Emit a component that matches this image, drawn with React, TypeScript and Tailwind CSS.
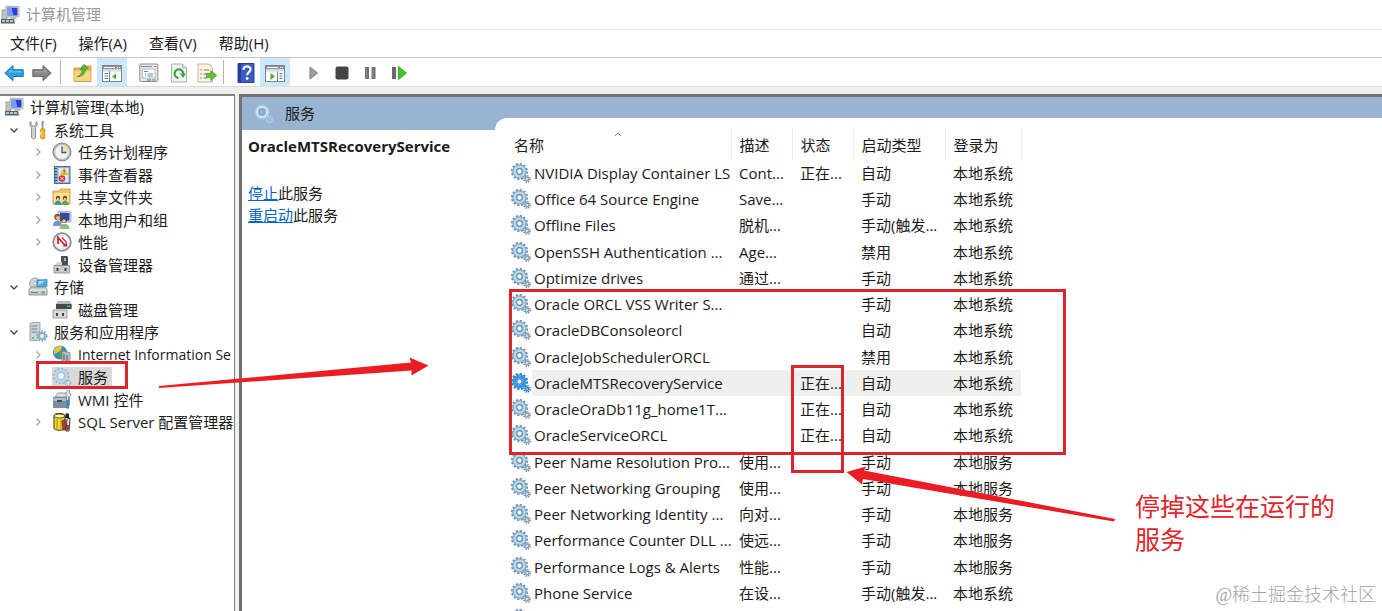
import type { ReactNode } from 'react'

type IconProps = { className?: string }

const Svg = ({ children, className = 'w-5 h-5' }: { children: ReactNode; className?: string }) => (
  <svg viewBox="0 0 20 20" className={`${className} shrink-0`} fill="none" aria-hidden="true">
    {children}
  </svg>
)

/* ---------- gears ---------- */

const GearIcon = () => (
  <Svg>
    <circle cx="8.500" cy="8.500" r="7.400" stroke="#7394ae" strokeWidth="2.400" strokeDasharray="2.200 1.670" />
    <circle cx="8.500" cy="8.500" r="5" stroke="#a3c8e2" strokeWidth="4" />
    <circle cx="8.500" cy="8.500" r="6.600" stroke="#7596b0" strokeWidth="0.700" />
    <circle cx="8.500" cy="8.500" r="4.900" stroke="#bbdcf1" strokeWidth="1.500" />
    <circle cx="8.500" cy="8.500" r="2.800" fill="#fff" stroke="#5f88a9" strokeWidth="1.200" />
    <circle cx="16" cy="16" r="3" stroke="#738fa6" strokeWidth="1.800" strokeDasharray="1.300 1.050" />
    <circle cx="16" cy="16" r="1.700" fill="#e4eff7" stroke="#85a8c3" strokeWidth="1.400" />
  </Svg>
)

const GearActiveIcon = () => (
  <Svg>
    <circle cx="8.500" cy="8.500" r="7.400" stroke="#2b7fc4" strokeWidth="2.400" strokeDasharray="2.200 1.670" />
    <circle cx="8.500" cy="8.500" r="5" stroke="#3b97df" strokeWidth="4" />
    <circle cx="8.500" cy="8.500" r="2.600" fill="#e8f5ff" stroke="#2474b8" strokeWidth="1" />
    <circle cx="16" cy="16" r="3" stroke="#2b7fc4" strokeWidth="1.800" strokeDasharray="1.300 1.050" />
    <circle cx="16" cy="16" r="1.700" fill="#8cc5ef" stroke="#3b8fd2" strokeWidth="1.400" />
  </Svg>
)

const GearLightIcon = () => (
  <Svg>
    <circle cx="9" cy="9" r="7.400" stroke="#8fb0c9" strokeWidth="1.800" strokeDasharray="2 1.870" />
    <circle cx="9" cy="9" r="5.400" stroke="#b9d5ea" strokeWidth="2.600" />
    <circle cx="9" cy="9" r="3.600" fill="#eef4f8" stroke="#86a9c4" strokeWidth="0.800" />
    <circle cx="16" cy="16" r="2.600" stroke="#94b0c6" strokeWidth="1.800" strokeDasharray="1.200 0.840" />
    <circle cx="16" cy="16" r="1.200" fill="#dce9f2" />
  </Svg>
)

const GearHeaderIcon = () => (
  <Svg>
    <circle cx="8" cy="8" r="6.200" stroke="#a9cfe8" strokeWidth="2.600" />
    <circle cx="8" cy="8" r="5" stroke="#dcedf8" strokeWidth="1.600" />
    <circle cx="8" cy="8" r="4" fill="#8fabc9" />
    <circle cx="15.500" cy="15.500" r="2.800" stroke="#b6cfe2" strokeWidth="2" strokeDasharray="1.300 0.900" />
    <circle cx="15.500" cy="15.500" r="1.200" fill="#a4c0da" />
  </Svg>
)

/* ---------- tree icons ---------- */

const ComputerIcon = ({ className }: IconProps) => (
  <Svg className={className}>
    <path d="M2 5h5v9H2z" fill="#c3c8bd" stroke="#8b9087" strokeWidth="0.8" />
    <path d="M6 1l13 .6v10.2L6 12z" fill="#dfe3e6" stroke="#9a9fa6" strokeWidth="0.8" />
    <path d="M7.5 2.4l10 .4v7.6l-10 .2z" fill="#2a3fd0" />
    <path d="M7.5 2.4h4l2 8.1-6 .1z" fill="#7f9af0" />
    <path d="M11 12h5l1 2h-7z" fill="#b9bdc2" />
    <path d="M1 14h13l1 4.5H1z" fill="#59636b" />
    <path d="M2 15h3v2H2zm4 0h3v2H6zm4 0h3v2h-3z" fill="#b9c5cc" />
  </Svg>
)

const ToolsIcon = () => (
  <Svg>
    <path d="M3 1.5C1 3 1.200 6 3.500 7.300V17c0 2.500 4 2.500 4 0V7.300C9.800 6 10 3 8 1.500V5L5.500 6.200 3 5z" fill="#cdd2d5" stroke="#858b8f" strokeWidth="0.9" />
    <path d="M13.500 1h2.200l-.3 8h-1.600z" fill="#8d949a" />
    <path d="M12.500 9.500c0-1 4.500-1 4.500 0v2l-.6 1 .6 5c0 2-4.500 2-4.500 0l.6-5-.6-1z" fill="#f6ae1c" stroke="#c98408" strokeWidth="0.7" />
    <path d="M14 11v6" stroke="#ffe08a" />
  </Svg>
)

const ClockIcon = () => (
  <Svg>
    <circle cx="10" cy="10" r="9" fill="#b7bbbe" stroke="#7f8487" strokeWidth="1" />
    <circle cx="10" cy="10" r="6.900" fill="#eef3f7" />
    <path d="M10 10V3.100A6.900 6.900 0 0 1 16.900 10z" fill="#f5dfa4" />
    <path d="M10 4.500V10.500h4.500" stroke="#47566a" strokeWidth="1.300" />
  </Svg>
)

const EventIcon = () => (
  <Svg>
    <rect x="2.500" y="1.500" width="15.500" height="17" fill="#8fb0d6" stroke="#4b6c98" />
    <path d="M6.500 3h10v14h-10z" fill="#dfe9f3" />
    <path d="M2 3.500h3m-3 3h3m-3 3h3m-3 3h3m-3 3h3" stroke="#36516f" strokeWidth="1.200" />
    <path d="M12 3l4 6.500H8.500z" fill="#f8d32c" stroke="#c89a0a" strokeWidth="0.600" />
    <path d="M12.200 5.200v2m0 .8v.8" stroke="#333" />
    <circle cx="10" cy="13.500" r="3.300" fill="#da2f3c" />
    <path d="M8.700 12.200l2.600 2.600m0-2.600l-2.600 2.600" stroke="#fff" />
  </Svg>
)

const SharedFolderIcon = () => (
  <Svg>
    <path d="M1 4h6l1.500-2H18v15H1z" fill="#f0c75e" stroke="#c49a35" strokeWidth="0.800" />
    <path d="M2 6h15v10H2z" fill="#fbe193" />
    <circle cx="6" cy="11" r="2.200" fill="#6b4a2a" />
    <path d="M2.500 18c0-6 7-6 7 0z" fill="#3a94a6" />
    <circle cx="13" cy="11" r="2.200" fill="#7b3c24" />
    <path d="M9.700 18c0-6 7-6 7 0z" fill="#58a659" />
    <circle cx="6" cy="12" r="1.200" fill="#f0c6a0" />
    <circle cx="13" cy="12" r="1.200" fill="#f0c6a0" />
  </Svg>
)

const UsersIcon = () => (
  <Svg>
    <path d="M6 1l13 .8V12L6 12.500z" fill="#d4d9e2" stroke="#98a0ad" strokeWidth="0.700" />
    <path d="M8 2.500l9.500.6v7.400L8 11z" fill="#2c49c0" />
    <circle cx="5.500" cy="7" r="3.200" fill="#8b5b30" />
    <path d="M1 16c0-7 9-7 9 0z" fill="#6f96cf" />
    <circle cx="6" cy="8" r="1.900" fill="#eec39b" />
    <circle cx="12" cy="10" r="3" fill="#5b4630" />
    <path d="M7.500 19c0-7 10-7 10 0z" fill="#8dbd80" />
    <circle cx="12" cy="11" r="1.800" fill="#eec39b" />
  </Svg>
)

const PerformanceIcon = () => (
  <Svg>
    <circle cx="10" cy="10" r="8.800" fill="#fff" stroke="#8a8d8f" strokeWidth="1.800" />
    <circle cx="10" cy="10" r="7" stroke="#d2d5d7" strokeWidth="0.800" />
    <path d="M6 12V5.500l7.500 8.500" stroke="#d8202d" strokeWidth="1.800" />
    <path d="M10 5.500l4.500 5" stroke="#d8202d" strokeWidth="1.200" />
    <path d="M10.500 14.500H15V10z" fill="#d8202d" />
  </Svg>
)

const DeviceIcon = () => (
  <Svg>
    <path d="M9 1h6l1 1v9H9z" fill="#4b4f52" />
    <path d="M12 3h2v3h-2z" fill="#a5adb1" />
    <path d="M3 10l2-3h5v3z" fill="#d5d8da" />
    <path d="M2 10.500h15.500V18H2z" fill="#c9cccd" stroke="#83888b" strokeWidth="0.800" />
    <path d="M4.500 13h2v3h-2zm8 0h2v3h-2z" fill="#3f4447" />
  </Svg>
)

const StorageIcon = () => (
  <Svg>
    <circle cx="7" cy="6.500" r="5.500" fill="#ccd3d7" stroke="#8e9599" strokeWidth="0.800" />
    <circle cx="7" cy="6.500" r="1.600" fill="#fff" stroke="#8e9599" strokeWidth="0.600" />
    <path d="M9 3l10-.5v7L9 10z" fill="#49a9dd" stroke="#2f7ba8" strokeWidth="0.700" />
    <path d="M10.500 4.200l7-.4-7 4.500z" fill="#a7dcf4" />
    <path d="M1 12l2-2h14l2 2v6H1z" fill="#c6cacb" stroke="#7f8486" strokeWidth="0.800" />
    <path d="M1.500 13h17" stroke="#eef0f0" />
    <path d="M14 14.500h2.500v2H14z" fill="#3eb54a" />
    <path d="M3 15.500h7" stroke="#777c7e" />
  </Svg>
)

const DiskIcon = () => (
  <Svg>
    <path d="M4 4l2-3h12l1.500 3v5H4z" fill="#b5babc" />
    <path d="M4 4h15.500v5H4z" fill="#45494b" />
    <path d="M15 5.500h3v1.500h-3z" fill="#43c457" />
    <path d="M1 10h14v8H1z" fill="#d7dadb" stroke="#8a8f91" strokeWidth="0.800" />
    <path d="M4 13h2v3H4zm6 0h2v3h-2z" fill="#3f4447" />
  </Svg>
)

const ServerIcon = () => (
  <Svg>
    <path d="M2 1.500L4 .500h8v16l-2 2H2z" fill="#cfd6da" stroke="#8c979d" strokeWidth="0.800" />
    <path d="M3.500 4h6m-6 3h6m-6 3h6" stroke="#6f7d85" strokeWidth="1.200" />
    <path d="M4 16h2" stroke="#43b852" strokeWidth="1.500" />
    <circle cx="14" cy="14" r="4.600" stroke="#7f9fba" strokeWidth="1.800" strokeDasharray="1.700 1.200" />
    <circle cx="14" cy="14" r="3" fill="#edf4f9" stroke="#8cb2cf" strokeWidth="2" />
  </Svg>
)

const IisIcon = () => (
  <Svg>
    <circle cx="8" cy="7.500" r="7" fill="#3b86c8" />
    <path d="M2 5c2-4 6-5 8-4L9 5 5 8 2 9z" fill="#efc22d" />
    <path d="M6 9l5-4 3 1-2 6-4 2z" fill="#46ab4f" />
    <path d="M10 6l8 1.500V19l-8-3z" fill="#b9bec1" stroke="#7d8386" strokeWidth="0.800" />
    <path d="M12 9v6m3-5v6" stroke="#666d71" strokeWidth="1.200" />
  </Svg>
)

const WmiIcon = () => (
  <Svg>
    <path d="M3 7l3-4h10l-2 4z" fill="#dde2e5" stroke="#7c868c" strokeWidth="0.800" />
    <path d="M1 7h13l4-3v11l-3 3H1z" fill="#7a8d9c" />
    <path d="M1 8h13v3H1z" fill="#aebdc8" />
    <path d="M5 10h5v2H5z" fill="#3d4c58" />
    <path d="M14 3c0-2 3-3 4-2l-1 2 2 1c0 2-1.500 3-2.500 3V18h-2V7c-.5-1-.5-3-.5-4z" fill="#e0e5e8" stroke="#6e7a82" strokeWidth="0.700" />
    <path d="M14.500 10h2.500v8.500h-2.500z" fill="#3f83bf" />
  </Svg>
)

const SqlIcon = () => (
  <Svg>
    <path d="M2 4c0-3.500 11-3.500 11 0v12c0 3-11 3-11 0z" fill="#f3d832" stroke="#3c3508" strokeWidth="1" />
    <ellipse cx="7.500" cy="4" rx="5.300" ry="2" fill="#fcf3a6" stroke="#3c3508" strokeWidth="0.800" />
    <path d="M5 7v11M9 7v11" stroke="#a58d10" strokeWidth="0.900" />
    <path d="M14 1l3 1v4h-4z" fill="#222" />
    <path d="M10 9l3-2 1 11h-3z" fill="#d62d22" stroke="#333" strokeWidth="0.700" />
    <path d="M15 7l3-1-1 13h-3z" fill="#e8ecef" stroke="#222" strokeWidth="0.900" />
    <path d="M15 13h2v5h-2z" fill="#c4282b" />
  </Svg>
)

/* ---------- toolbar icons ---------- */

const BackIcon = () => (
  <Svg>
    <path d="M.8 10L9 2.500v4.200h10.200v6.800H9v4.200z" fill="#2f9ee2" stroke="#1b78b8" strokeWidth="1" />
    <path d="M3.500 9.500L8 5.200v2.700h10v1.600z" fill="#5fbaf0" />
  </Svg>
)

const ForwardIcon = () => (
  <Svg>
    <path d="M19.200 10L11 2.500v4.200H.8v6.800H11v4.200z" fill="#858585" stroke="#6a6a6a" strokeWidth="1" />
    <path d="M16.500 9.500L12 5.200v2.700H2v1.600z" fill="#9c9c9c" />
  </Svg>
)

const FolderUpIcon = () => (
  <Svg>
    <path d="M1 5h7l1.500-2H18v15.500H1z" fill="#e9bd55" stroke="#c0933a" strokeWidth="0.800" />
    <path d="M1.500 8h16v10h-16z" fill="#f6d683" />
    <path d="M4 13.500C7 13 9 10.500 9.500 6.500L7 6.800 11 1.500l4.500 4-2.700.3C12 11 9 14 4 13.500z" fill="#58b93a" stroke="#37881f" strokeWidth="0.700" />
  </Svg>
)

const TreePaneIcon = () => (
  <Svg>
    <rect x="0.500" y="2.500" width="19" height="16" fill="#fff" stroke="#7d8287" />
    <path d="M1 3h18v3H1z" fill="#8f959b" />
    <path d="M2 4.500h11m2 0h1m1 0h1" stroke="#fff" strokeWidth="0.900" />
    <path d="M1 6h18v2.500H1z" fill="#d5d9dc" />
    <path d="M7.500 8.500V18" stroke="#7d8287" />
    <path d="M2.500 10.500h3.500m-3.500 2.500h3.500m-3.500 2.500h3.500" stroke="#4878a8" strokeWidth="1.200" />
    <path d="M14 10.500v6l-4-3z" fill="#43b52d" />
  </Svg>
)

const PropertiesIcon = () => (
  <Svg>
    <rect x="0.800" y="1" width="18" height="17.500" rx="1" fill="#e6e9eb" stroke="#888e92" />
    <path d="M2 3.500h11m2 0h2.500" stroke="#858c91" strokeWidth="1.200" />
    <rect x="3.500" y="6" width="12.500" height="9" fill="#fff" stroke="#a7adb1" strokeWidth="0.800" />
    <path d="M5 8.500h4M6 11h1m1.500 0H14M6 13h1m1.500 0H14" stroke="#6a8db0" strokeWidth="1" />
    <path d="M8 17h4" stroke="#3fa0dc" strokeWidth="1.500" />
    <path d="M13 17h4" stroke="#9aa0a4" strokeWidth="1.500" />
  </Svg>
)

const RefreshIcon = () => (
  <Svg>
    <path d="M2.500 1h11l4 4v14h-15z" fill="#f1f3f3" stroke="#a0a5a8" strokeWidth="0.900" />
    <path d="M13.500 1v4h4" fill="#d6dadc" stroke="#a0a5a8" strokeWidth="0.800" />
    <path d="M9.500 15A4.300 4.300 0 1 1 14.200 11" stroke="#3aa83a" strokeWidth="2.300" />
    <path d="M11 10.500h6L14 15z" fill="#3aa83a" />
  </Svg>
)

const ExportIcon = () => (
  <Svg>
    <path d="M1 1h11l3.500 3.500V19H1z" fill="#faf6df" stroke="#b1ae98" strokeWidth="0.900" />
    <path d="M3.500 7h1.200m-1.200 4h1.200m-1.200 4h1.200" stroke="#555" strokeWidth="1.200" />
    <path d="M6.500 7H12m-5.500 4H10m-3.500 4H10" stroke="#77746a" strokeWidth="1.200" />
    <path d="M9.500 10.500h4.300V7.500L19.800 12.500l-6 5v-3H9.500z" fill="#62c03d" stroke="#3d9420" strokeWidth="0.700" />
  </Svg>
)

const HelpIcon = () => (
  <Svg>
    <path d="M2 .500h16v19H2z" fill="#3b5cc4" stroke="#1f3784" strokeWidth="0.900" />
    <path d="M2.500 1h2.500v18H2.500z" fill="#233f9c" />
    <path d="M7.500 6.800c0-4.600 7-4.400 7-.6 0 2.800-3.300 2.800-3.300 6" stroke="#fff" strokeWidth="2.200" />
    <circle cx="11.200" cy="15.500" r="1.400" fill="#fff" />
  </Svg>
)

const ActionPaneIcon = () => (
  <Svg>
    <rect x="0.500" y="2.500" width="19" height="16" fill="#fff" stroke="#7d8287" />
    <path d="M1 3h18v3H1z" fill="#8f959b" />
    <path d="M2 4.500h11m2 0h1m1 0h1" stroke="#fff" strokeWidth="0.900" />
    <path d="M1 6h18v2.500H1z" fill="#d5d9dc" />
    <path d="M12.500 8.500V18" stroke="#7d8287" />
    <path d="M14.500 10.500h3m-3 2.500h3m-3 2.500h3" stroke="#4878a8" strokeWidth="1.200" />
    <path d="M5.500 10v7l4.500-3.500z" fill="#43b52d" />
  </Svg>
)

const PlayIcon = () => (
  <Svg>
    <path d="M6 4l7.500 6L6 16z" fill="#a0a0a0" stroke="#7b7b7b" strokeWidth="1" />
  </Svg>
)

const StopIcon = () => (
  <Svg>
    <rect x="3.500" y="3.500" width="13" height="13" rx="2" fill="#454545" />
  </Svg>
)

const PauseIcon = () => (
  <Svg>
    <path d="M5 4h4v12H5zm6.500 0h4v12h-4z" fill="#6e6e6e" />
    <path d="M6 5h1v10H6zm6.500 0h1v10h-1z" fill="#8f8f8f" />
  </Svg>
)

const RestartIcon = () => (
  <Svg>
    <path d="M4 4h4v12H4z" fill="#6b6b6b" />
    <path d="M10.500 3.500l8 6.500-8 6.500z" fill="#3ecb27" stroke="#2a9c18" strokeWidth="0.800" />
  </Svg>
)

const Chevron = ({ open }: { open: boolean }) => (
  <svg viewBox="0 0 20 20" className="w-5 h-5" fill="none" aria-hidden="true">
    {open ? (
      <path d="M6.500 8.500L10 12l3.500-3.500" stroke="#444" strokeWidth="1.300" />
    ) : (
      <path d="M8.500 6.500L12 10l-3.500 3.500" stroke="#a0a0a0" strokeWidth="1.200" />
    )}
  </svg>
)

/* ---------- data ---------- */

type TreeItem = {
  level: 0 | 1 | 2
  label: string
  icon: ReactNode
  open?: boolean
  selected?: boolean
  small?: boolean
}

const tree: TreeItem[] = [
  { level: 0, label: '计算机管理(本地)', icon: <ComputerIcon /> },
  { level: 1, label: '系统工具', icon: <ToolsIcon />, open: true },
  { level: 2, label: '任务计划程序', icon: <ClockIcon />, open: false },
  { level: 2, label: '事件查看器', icon: <EventIcon />, open: false },
  { level: 2, label: '共享文件夹', icon: <SharedFolderIcon />, open: false },
  { level: 2, label: '本地用户和组', icon: <UsersIcon />, open: false },
  { level: 2, label: '性能', icon: <PerformanceIcon />, open: false },
  { level: 2, label: '设备管理器', icon: <DeviceIcon /> },
  { level: 1, label: '存储', icon: <StorageIcon />, open: true },
  { level: 2, label: '磁盘管理', icon: <DiskIcon /> },
  { level: 1, label: '服务和应用程序', icon: <ServerIcon />, open: true },
  { level: 2, label: 'Internet Information Se', icon: <IisIcon />, open: false, small: true },
  { level: 2, label: '服务', icon: <GearLightIcon />, selected: true },
  { level: 2, label: 'WMI 控件', icon: <WmiIcon /> },
  { level: 2, label: 'SQL Server 配置管理器', icon: <SqlIcon />, open: false },
]

const indent = ['pl-1', 'pl-1', 'pl-7']

const services = [
  ['NVIDIA Display Container LS', 'Cont...', '正在...', '自动', '本地系统'],
  ['Office 64 Source Engine', 'Save...', '', '手动', '本地系统'],
  ['Offline Files', '脱机...', '', '手动(触发...', '本地系统'],
  ['OpenSSH Authentication ...', 'Age...', '', '禁用', '本地系统'],
  ['Optimize drives', '通过...', '', '手动', '本地系统'],
  ['Oracle ORCL VSS Writer S...', '', '', '手动', '本地系统'],
  ['OracleDBConsoleorcl', '', '', '自动', '本地系统'],
  ['OracleJobSchedulerORCL', '', '', '禁用', '本地系统'],
  ['OracleMTSRecoveryService', '', '正在...', '自动', '本地系统'],
  ['OracleOraDb11g_home1T...', '', '正在...', '自动', '本地系统'],
  ['OracleServiceORCL', '', '正在...', '自动', '本地系统'],
  ['Peer Name Resolution Pro...', '使用...', '', '手动', '本地服务'],
  ['Peer Networking Grouping', '使用...', '', '手动', '本地服务'],
  ['Peer Networking Identity ...', '向对...', '', '手动', '本地服务'],
  ['Performance Counter DLL ...', '使远...', '', '手动', '本地服务'],
  ['Performance Logs & Alerts', '性能...', '', '手动', '本地服务'],
  ['Phone Service', '在设...', '', '手动(触发...', '本地系统'],
  ['', '', '', '', ''],
]

const selectedService = 'OracleMTSRecoveryService'

/* ---------- parts ---------- */

const ToolButton = ({ label, active, children }: { label: string; active?: boolean; children: ReactNode }) => (
  <button
    type="button"
    aria-label={label}
    className={
      active
        ? 'flex h-7 w-[30px] items-center justify-center bg-[#cce8ff] pt-0.5'
        : 'flex h-7 w-7 items-center justify-center pt-0.5'
    }
  >
    {children}
  </button>
)

const Toolbar = () => (
  <div className="flex h-[29px] items-center border-b border-[#dcdcdc] bg-white">
    <ToolButton label="后退"><BackIcon /></ToolButton>
    <ToolButton label="前进"><ForwardIcon /></ToolButton>
    <div className="ml-1 mr-2 h-6 w-px bg-[#b5b5b5]" />
    <ToolButton label="上一级"><FolderUpIcon /></ToolButton>
    <ToolButton label="显示/隐藏控制台树" active><TreePaneIcon /></ToolButton>
    <div className="ml-2 mr-0.5"><ToolButton label="属性"><PropertiesIcon /></ToolButton></div>
    <ToolButton label="刷新"><RefreshIcon /></ToolButton>
    <ToolButton label="导出列表"><ExportIcon /></ToolButton>
    <div className="ml-0.5 mr-2 h-6 w-px bg-[#b5b5b5]" />
    <ToolButton label="帮助"><HelpIcon /></ToolButton>
    <ToolButton label="显示/隐藏操作窗格" active><ActionPaneIcon /></ToolButton>
    <div className="ml-2.5 flex">
      <ToolButton label="启动服务"><PlayIcon /></ToolButton>
      <ToolButton label="停止服务"><StopIcon /></ToolButton>
      <ToolButton label="暂停服务"><PauseIcon /></ToolButton>
      <ToolButton label="重启动服务"><RestartIcon /></ToolButton>
    </div>
  </div>
)

const TreePane = () => (
  <nav className="w-[235px] shrink-0 overflow-hidden border-r border-t-2 border-[#828282] bg-white">
    <ul>
      {tree.map((item) => (
        <li key={item.label} className={`flex h-[22px] items-center whitespace-nowrap even:h-[23px] ${indent[item.level]}`}>
          {item.level > 0 && (
            <span className="mr-1 w-5 shrink-0">
              {item.open !== undefined && (
                <button type="button" aria-label={`展开 ${item.label}`} aria-expanded={item.open} className="block">
                  <Chevron open={item.open} />
                </button>
              )}
            </span>
          )}
          <button
            type="button"
            className={`flex h-5 items-center gap-1.5 leading-5 ${item.small ? 'text-sm' : ''} ${item.selected ? 'bg-[#d9d9d9] pr-1' : ''}`}
          >
            {item.icon}
            {item.label}
          </button>
        </li>
      ))}
    </ul>
  </nav>
)

const DetailPane = () => (
  <section className="flex w-[253px] shrink-0 flex-col">
    <div className="flex h-[33px] items-center gap-[11px] pl-3">
      <GearHeaderIcon />
      <h1>服务</h1>
    </div>
    <div className="flex-1 bg-white pl-1.5 pt-1.5">
      <h2 className="font-bold leading-5">OracleMTSRecoveryService</h2>
      <div className="mt-[26px] leading-[22px]">
        <p><a href="#stop" className="text-[#0066cc] underline">停止</a>此服务</p>
        <p><a href="#restart" className="text-[#0066cc] underline">重启动</a>此服务</p>
      </div>
    </div>
  </section>
)

const ServiceTable = () => (
  <div className="mt-[21px] min-w-0 flex-1 overflow-hidden rounded-tl-xl bg-white pl-3.5 pt-2.5">
    <table className="w-[512px] table-fixed border-collapse whitespace-nowrap text-left">
      <colgroup>
        <col className="w-[23px]" />
        <col className="w-[199px]" />
        <col className="w-[61px]" />
        <col className="w-[61px]" />
        <col className="w-[92px]" />
        <col className="w-[76px]" />
      </colgroup>
      <thead>
        <tr className="h-8 *:border-r *:border-[#ececec] *:p-0 *:pt-0.5 *:font-normal">
          <th scope="col" colSpan={2} aria-sort="ascending">
            <div className="relative pl-[5px]">
              名称
              <svg viewBox="0 0 8 5" className="absolute -top-0.5 left-[105px] h-[5px] w-2" fill="none" aria-hidden="true">
                <path d="M1 4l3-3 3 3" stroke="#888" />
              </svg>
            </div>
          </th>
          <th scope="col"><div className="pl-2">描述</div></th>
          <th scope="col"><div className="pl-2">状态</div></th>
          <th scope="col"><div className="pl-2">启动类型</div></th>
          <th scope="col"><div className="pl-2">登录为</div></th>
        </tr>
      </thead>
      <tbody>
        {services.map(([name, desc, status, start, logon], i) => {
          const selected = name === selectedService
          return (
            <tr key={i} className="h-[26px] leading-5 *:p-0 nth-[4n]:h-[27px]">
              <td><div className="pl-0.5">{selected ? <GearActiveIcon /> : <GearIcon />}</div></td>
              <td className={selected ? 'bg-[#efefef]' : ''}><div className="pl-0.5">{name}</div></td>
              {[desc, status, start, logon].map((text, n) => (
                <td key={n} className={selected ? 'bg-[#efefef]' : ''}><div className="pl-2">{text}</div></td>
              ))}
            </tr>
          )
        })}
      </tbody>
    </table>
  </div>
)

// red marks drawn over the window
const Annotations = () => (
  <div className="pointer-events-none absolute inset-0">
    <div className="absolute left-[36px] top-[361px] h-[28px] w-[92px] border-3 border-[#dc252b]" />
    <div className="absolute left-[509px] top-[289px] h-[166px] w-[557px] border-3 border-[#dc252b]" />
    <div className="absolute left-[791px] top-[365px] h-[108px] w-[53px] border-3 border-[#dc252b]" />
    <svg className="absolute left-0 top-0 h-[611px] w-[1382px]" viewBox="0 0 1382 611" aria-hidden="true">
      <path d="M159 386L411 362.500 409.500 357.500 428.500 365.500 411.500 375.500 411.500 370.500 159 388z" fill="#eb1c24" />
      <path d="M1115 519L864 470.500 866 466.500 846.500 472 862 484.500 863 479 1114 521.500z" fill="#eb1c24" />
    </svg>
    <p className="absolute left-[1135px] top-[490px] text-[25px] leading-[33px] text-[#e3242b]">
      停掉这些在运行的<br />服务
    </p>
    <p className="absolute bottom-1 right-1.5 font-['Liberation_Serif','Noto_Sans_CJK_SC',serif] text-lg font-light leading-6 text-[#a3a3a3]">
      @稀土掘金技术社区
    </p>
  </div>
)

const App = () => {
  return (
    <div className="relative flex h-screen flex-col overflow-hidden bg-[#f0f0f0] font-['Open_Sans','Noto_Sans_CJK_SC',sans-serif] text-[15px] text-[#1a1a1a]">
      <header className="flex h-[30px] items-center gap-1.5 border-b border-[#e8e8e8] bg-white text-[#999]">
        <ComputerIcon className="w-5 h-5" />
        <span>计算机管理</span>
      </header>
      <div className="flex h-7 items-center gap-[22px] border-b border-[#c4c4c4] bg-white pl-2.5">
        <button type="button">文件(F)</button>
        <button type="button">操作(A)</button>
        <button type="button">查看(V)</button>
        <button type="button">帮助(H)</button>
      </div>
      <Toolbar />
      <main className="mt-[7px] flex min-h-0 flex-1">
        <TreePane />
        <div className="ml-1 flex min-w-0 flex-1 border-l-3 border-t-3 border-[#6f7175] bg-[#99b4d1]">
          <DetailPane />
          <ServiceTable />
        </div>
      </main>
      <Annotations />
    </div>
  )
}

export default App
